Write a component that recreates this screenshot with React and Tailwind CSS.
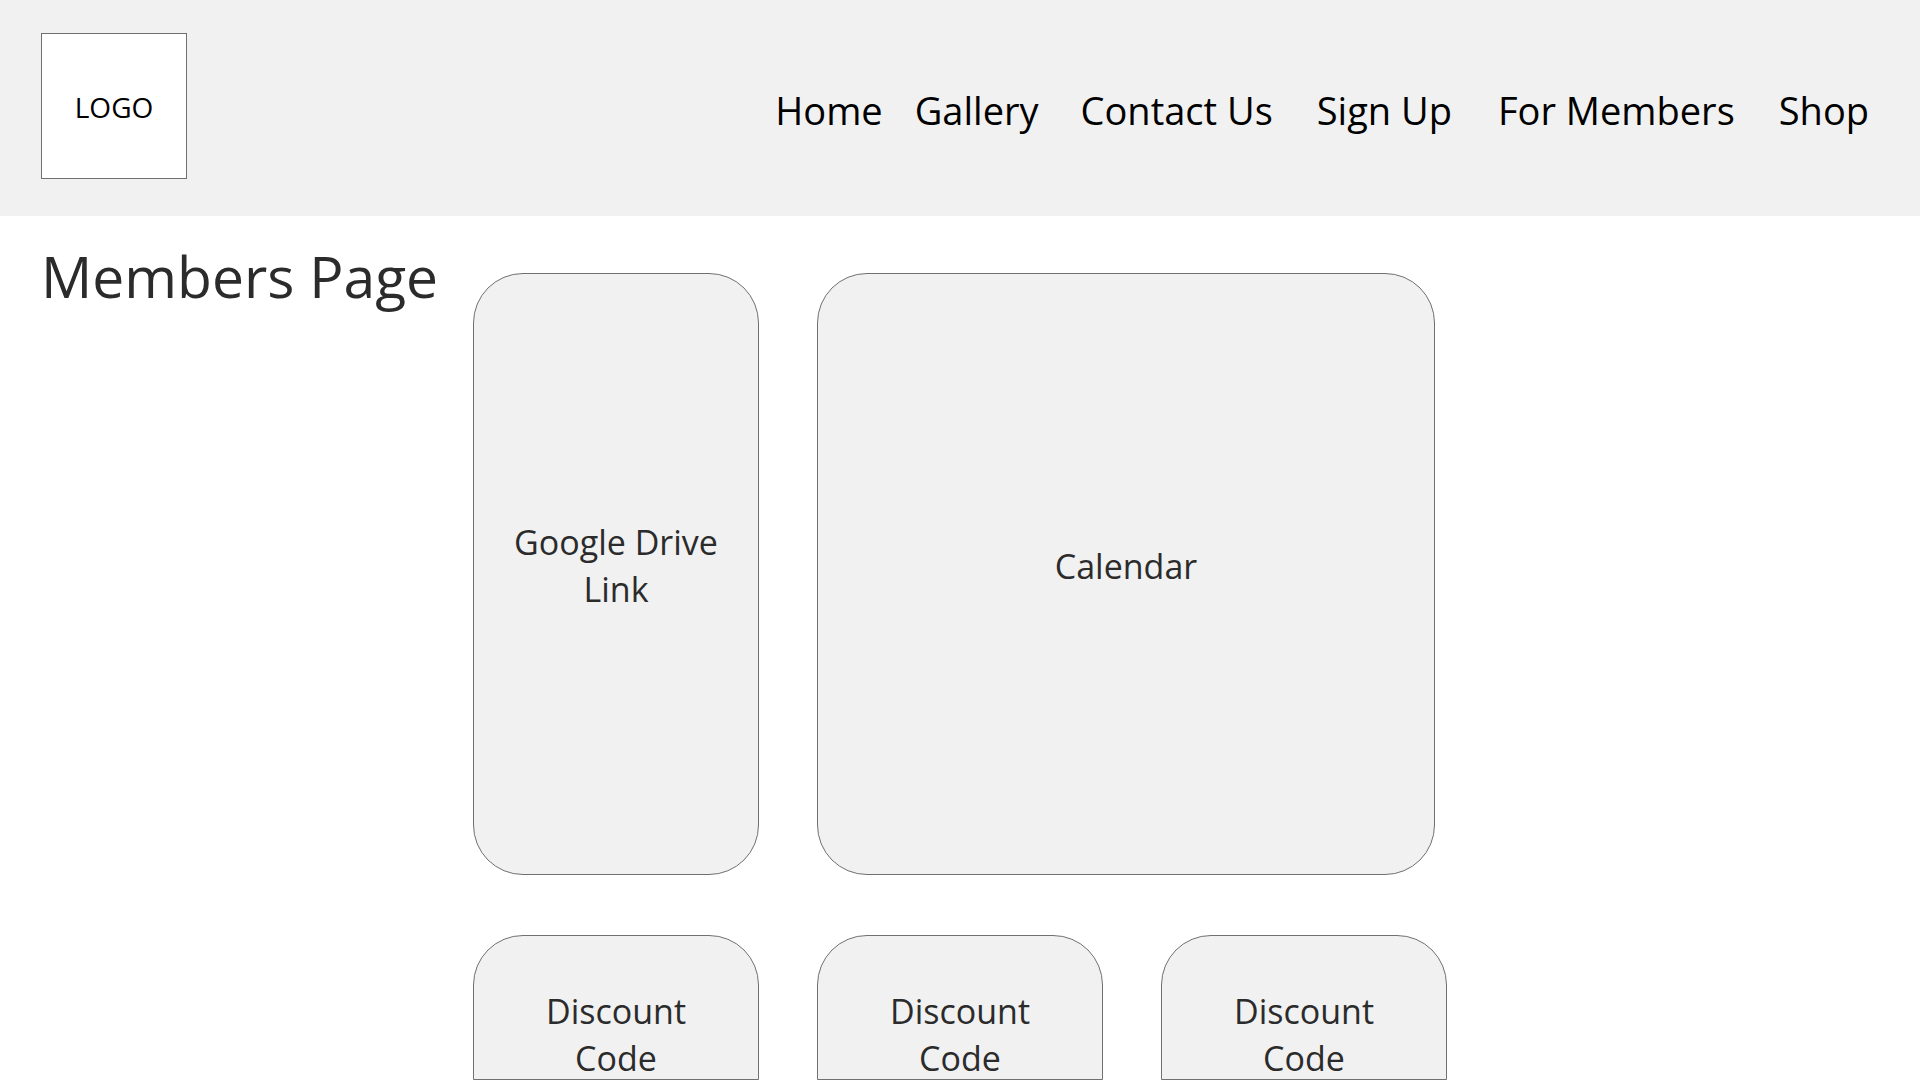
const links = [
  { label: 'Home', spacing: 'mr-8' },
  { label: 'Gallery', spacing: 'mr-[42px]' },
  { label: 'Contact Us', spacing: 'mr-11' },
  { label: 'Sign Up', spacing: 'mr-[46px]' },
  { label: 'For Members', spacing: 'mr-11' },
  { label: 'Shop', spacing: '' },
];

const discounts = ['first', 'second', 'third'];

function Header() {
  return (
    <header className="flex h-[216px] items-start justify-between bg-[#f1f1f1] pt-[33px] pr-[51px] pl-[41px] text-black">
      <a
        href="#home"
        className="flex size-[146px] shrink-0 items-center justify-center border border-[#707070] bg-white pt-0.5 text-[28px] leading-10"
      >
        LOGO
      </a>
      <nav className="flex pt-[51px] text-[38px] leading-[52px] whitespace-nowrap">
        {links.map(({ label, spacing }) => (
          <a key={label} href="#" className={spacing}>
            {label}
          </a>
        ))}
      </nav>
    </header>
  );
}

function Card({ className, children }) {
  return (
    <a
      href="#"
      className={`flex justify-center border border-[#707070] bg-[#f1f1f1] px-8 text-center text-[34px] leading-[47px] ${className}`}
    >
      {children}
    </a>
  );
}

export default function App() {
  return (
    <div className="min-h-screen bg-white font-['Open_Sans','Noto_Sans',sans-serif] text-[#2b2b2b]">
      <Header />
      <main className="grid grid-cols-[1fr_minmax(0,974px)_1fr]">
        <h1 className="pt-5 pl-[41px] text-[57px] leading-20 whitespace-nowrap">Members Page</h1>
        <div className="grid grid-cols-3 gap-x-[58px] gap-y-15 pt-[57px]">
          <Card className="h-[602px] items-center rounded-[50px] pb-4">Google Drive Link</Card>
          <Card className="col-span-2 mr-3 items-center rounded-[50px] pb-4">Calendar</Card>
          {discounts.map((id) => (
            <Card key={id} className="h-[145px] items-start overflow-hidden rounded-t-[50px] pt-[52px]">
              Discount Code
            </Card>
          ))}
        </div>
      </main>
    </div>
  );
}
